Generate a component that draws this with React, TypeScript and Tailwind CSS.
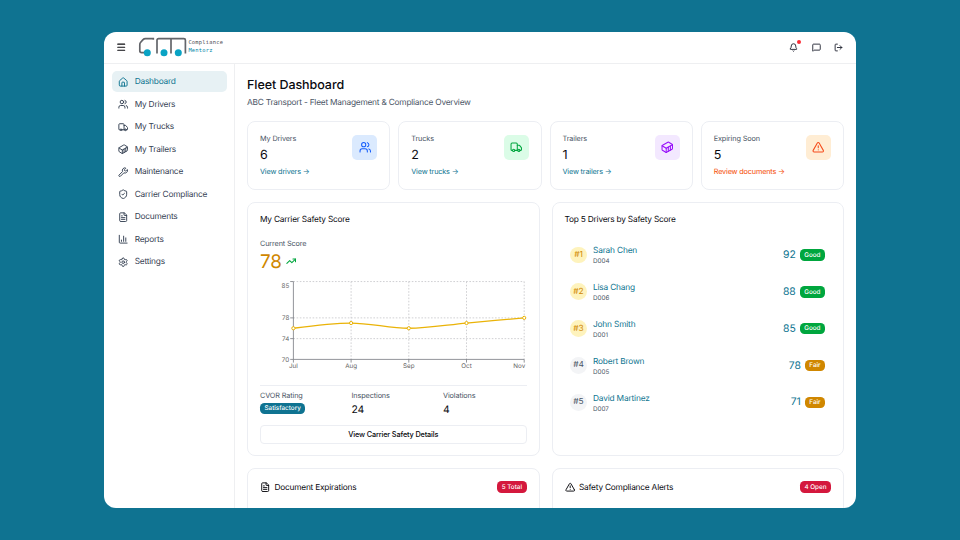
import React from "react";
import {
  Bell,
  ChartColumn,
  Container,
  FileText,
  House,
  LogOut,
  Menu,
  MessageSquare,
  Settings,
  ShieldCheck,
  TrendingUp,
  TriangleAlert,
  Truck,
  Users,
  Wrench,
  type LucideIcon,
} from "lucide-react";

interface NavItem {
  label: string;
  icon: LucideIcon;
  active?: boolean;
}

interface Stat {
  label: string;
  value: string;
  link: string;
  linkClass: string;
  icon: LucideIcon;
  iconClass: string;
}

interface Driver {
  name: string;
  id: string;
  score: number;
}

const navItems: NavItem[] = [
  { label: "Dashboard", icon: House, active: true },
  { label: "My Drivers", icon: Users },
  { label: "My Trucks", icon: Truck },
  { label: "My Trailers", icon: Container },
  { label: "Maintenance", icon: Wrench },
  { label: "Carrier Compliance", icon: ShieldCheck },
  { label: "Documents", icon: FileText },
  { label: "Reports", icon: ChartColumn },
  { label: "Settings", icon: Settings },
];

const stats: Stat[] = [
  { label: "My Drivers", value: "6", link: "View drivers →", linkClass: "text-[#0e7490]", icon: Users, iconClass: "bg-blue-100 text-blue-600" },
  { label: "Trucks", value: "2", link: "View trucks →", linkClass: "text-[#0e7490]", icon: Truck, iconClass: "bg-green-100 text-green-600" },
  { label: "Trailers", value: "1", link: "View trailers →", linkClass: "text-[#0e7490]", icon: Container, iconClass: "bg-purple-100 text-purple-600" },
  { label: "Expiring Soon", value: "5", link: "Review documents →", linkClass: "text-orange-600", icon: TriangleAlert, iconClass: "bg-[#ffedd4] text-[#f54a1a]" },
];

const drivers: Driver[] = [
  { name: "Sarah Chen", id: "D004", score: 92 },
  { name: "Lisa Chang", id: "D006", score: 88 },
  { name: "John Smith", id: "D001", score: 85 },
  { name: "Robert Brown", id: "D005", score: 78 },
  { name: "David Martinez", id: "D007", score: 71 },
];

const history = [
  { month: "Jul", score: 76 },
  { month: "Aug", score: 77 },
  { month: "Sep", score: 76 },
  { month: "Oct", score: 77 },
  { month: "Nov", score: 78 },
];

const Logo = () => (
  <div className="flex items-center">
    <svg width="49" height="20" viewBox="0 0 49 20" fill="none">
      <g stroke="#63656a" strokeWidth="1.7">
        <path d="M15.3 2.8V1.7H7.5Q6 1.7 4.8 2.9L2.7 5.2Q1.8 6.2 1.8 7.6V13.8Q1.8 15.7 3.6 15.7H6" />
        <path d="M19 16.6V3.3Q19 1.7 20.6 1.7H45.8Q47.4 1.7 47.4 3.3V16.6M33 1.7V16.6" />
      </g>
      <g fill="#0aa3c4">
        <circle cx="9.3" cy="15.7" r="3.5" />
        <circle cx="26" cy="15.7" r="3.5" />
        <circle cx="40.3" cy="15.7" r="3.5" />
      </g>
    </svg>
    <div className="ml-[1px] font-['DejaVu_Sans_Mono',monospace] text-[5.4px] leading-[7.5px] tracking-[0.25px]">
      <div className="pt-[1px] text-[#4b4e53]">Compliance</div>
      <div className="pt-[0.5px] text-[#0086a6]">Mentorz</div>
    </div>
  </div>
);

const ScoreChart = () => {
  const px = (i: number) => 33.4 + i * 57.7;
  const py = (v: number) => 82.4 - (v - 70) * 5.19;
  const p = history.map((h, i) => [px(i), py(h.score)]);
  // monotone tangents at each month
  const t = [-7.8, 0, 0, -5.19, -5.19];
  const d = p
    .map(([x, y], i) => {
      if (i === 0) return `M${x},${y}`;
      const [x0, y0] = p[i - 1];
      return `C${x0 + 19.2},${y0 + t[i - 1] / 3} ${x - 19.2},${y - t[i] / 3} ${x},${y}`;
    })
    .join("");

  return (
    <svg width="268" height="96" viewBox="0 0 268 96" fill="none" className="block overflow-visible">
      <g stroke="#c4c4c8" strokeWidth="0.8" strokeDasharray="1.6 1.6">
        {[85, 78, 74].map((v) => (
          <line key={v} x1={px(0)} x2={px(4)} y1={py(v)} y2={py(v)} />
        ))}
        {[1, 2, 3, 4].map((i) => (
          <line key={i} x1={px(i)} x2={px(i)} y1={py(85)} y2={py(70)} />
        ))}
      </g>
      <g stroke="#777a80" strokeWidth="0.8">
        <line x1={px(0)} x2={px(0)} y1={py(85)} y2={py(70)} />
        <line x1={px(0)} x2={px(4)} y1={py(70)} y2={py(70)} />
        {[85, 78, 74, 70].map((v) => (
          <line key={v} x1={px(0) - 3.2} x2={px(0)} y1={py(v)} y2={py(v)} />
        ))}
        {history.map((h, i) => (
          <line key={h.month} x1={px(i)} x2={px(i)} y1={py(70)} y2={py(70) + 3.2} />
        ))}
      </g>
      <g fill="#666" fontSize="6.3">
        {[85, 78, 74, 70].map((v) => (
          <text key={v} x="29.3" y={v === 85 ? 11 : py(v) + 2.3} textAnchor="end">
            {v}
          </text>
        ))}
        {history.map((h, i) => (
          <text key={h.month} x={i === 4 ? 265.3 : px(i)} y="91" textAnchor={i === 4 ? "end" : "middle"}>
            {h.month}
          </text>
        ))}
      </g>
      <path d={d} stroke="#eab308" strokeWidth="1.3" />
      {p.map(([x, y]) => (
        <circle key={x} cx={x} cy={y} r="1.6" fill="#fff" stroke="#eab308" strokeWidth="1" />
      ))}
    </svg>
  );
};

const cardClass = "rounded-[8px] border border-[#eceef3] bg-white";
const titleClass = "text-[8.34px] leading-[12px] tracking-[-0.22px]";
const badgeClass = "flex h-[11.5px] items-center rounded-[4.5px] px-[4.5px] text-[6.3px] font-medium leading-none text-white";

const App: React.FC = () => {
  return (
    <div className="flex h-[540px] w-[960px] items-center justify-center bg-[#0f7391] font-['Inter',sans-serif] text-[#0a0a0f] [text-rendering:geometricPrecision]">
      <div className="flex h-[476px] w-[752px] flex-col overflow-hidden rounded-[12px] bg-white">
        <header className="flex h-[31.5px] shrink-0 items-center border-b border-[#eeeff1] pl-[12.3px] pr-[13px]">
          <Menu className="mr-[11.7px] size-[10.4px]" strokeWidth={2.6} />
          <Logo />
          <div className="ml-auto flex items-center gap-[13.5px] text-[#1f2330]">
            <div className="relative">
              <Bell className="size-[9px]" strokeWidth={2.4} />
              <span className="absolute -top-[3px] left-[7.5px] size-[4px] rounded-full bg-[#fb2c36]" />
            </div>
            <MessageSquare className="size-[9px]" strokeWidth={2.4} />
            <LogOut className="size-[9px]" strokeWidth={2.4} />
          </div>
        </header>

        <div className="flex min-h-0 flex-1">
          <aside className="w-[131px] shrink-0 border-r border-[#eeeff1] pl-[8px] pr-[7.5px] pt-[7.9px]">
            <nav className="flex flex-col gap-[1.5px]">
              {navItems.map((item) => (
                <div
                  key={item.label}
                  className={`flex h-[21px] items-center gap-[6px] rounded-[5px] pl-[6.3px] text-[8.34px] leading-[13px] tracking-[-0.22px] ${
                    item.active ? "bg-[#e7f1f4] text-[#0e7490]" : "text-[#364153]"
                  }`}
                >
                  <item.icon className="size-[10.4px]" strokeWidth={2.2} />
                  <span className="pt-[1.5px]">{item.label}</span>
                </div>
              ))}
            </nav>
          </aside>

          <main className="min-w-0 flex-1 pl-[12px] pr-[12px] pt-[13px]">
            <h1 className="text-[12.5px] font-medium leading-[18px] tracking-[-0.06px]">Fleet Dashboard</h1>
            <p className="text-[8.34px] leading-[16px] tracking-[-0.225px] text-[#4a5565]">
              ABC Transport - Fleet Management &amp; Compliance Overview
            </p>

            <div className="mt-[10px] grid grid-cols-4 gap-[8px]">
              {stats.map((stat) => (
                <div key={stat.label} className={`${cardClass} flex h-[69px] justify-between pl-[12px] pr-[12px] pt-[12px]`}>
                  <div>
                    <div className="text-[7.3px] leading-[10.5px] tracking-[-0.13px] text-[#4a5565]">{stat.label}</div>
                    <div className="pt-[1.5px] text-[12.5px] leading-[19px]">{stat.value}</div>
                    <div className={`whitespace-nowrap text-[7.3px] leading-[14.5px] tracking-[-0.17px] ${stat.linkClass}`}>
                      {stat.link}
                    </div>
                  </div>
                  <div className={`mt-[1.5px] flex size-[25px] items-center justify-center rounded-[5px] ${stat.iconClass}`}>
                    <stat.icon className="size-[12.5px]" />
                  </div>
                </div>
              ))}
            </div>

            <div className="mt-[12px] grid grid-cols-2 gap-[12px]">
              <section className={`${cardClass} h-[254.5px] px-[12px] pt-[11px]`}>
                <h2 className={titleClass}>My Carrier Safety Score</h2>
                <div className="mt-[12.5px] text-[7.3px] leading-[12px] tracking-[-0.14px] text-[#4a5565]">Current Score</div>
                <div className="flex h-[22.5px] items-center gap-[4px]">
                  <span className="pt-[1.5px] text-[18.8px] leading-[22px] text-[#d08700]">78</span>
                  <TrendingUp className="size-[10.4px] text-[#00a63e]" strokeWidth={2.4} />
                </div>
                <div className="mt-[4.5px] h-[109px] border-b border-[#eceef3]">
                  <ScoreChart />
                </div>
                <div className="grid h-[39px] grid-cols-3 gap-[8px] pt-[4px] text-[7.3px] leading-[11px] tracking-[-0.13px] text-[#4a5565]">
                  <div>
                    CVOR Rating
                    <div className={`${badgeClass} mt-[1.5px] w-fit bg-[#0f7391] tracking-normal`}>Satisfactory</div>
                  </div>
                  <div>
                    Inspections
                    <div className="text-[10.4px] leading-[18px] text-[#0a0a0f]">24</div>
                  </div>
                  <div>
                    Violations
                    <div className="text-[10.4px] leading-[18px] text-[#0a0a0f]">4</div>
                  </div>
                </div>
                <button className="block h-[19px] w-full rounded-[4px] border border-[#eceef3] text-[7.3px] font-medium leading-[17px] tracking-[-0.13px]">
                  View Carrier Safety Details
                </button>
              </section>

              <section className={`${cardClass} h-[254.5px] px-[12px] pt-[11px]`}>
                <h2 className={titleClass}>Top 5 Drivers by Safety Score</h2>
                <div className="mt-[11px] flex flex-col pl-[5.6px] pr-[6px]">
                  {drivers.map((driver, index) => (
                    <div key={driver.name} className="flex h-[36.85px] items-center">
                      <div
                        className={`flex size-[16.7px] items-center justify-center rounded-full pt-[0.5px] text-[8.34px] tracking-[-0.1px] ${
                          index < 3 ? "bg-[#fef3bd] text-[#d08700]" : "bg-[#f3f4f6] text-[#4a5565]"
                        }`}
                      >
                        #{index + 1}
                      </div>
                      <div className="ml-[6.2px] pt-[2.5px]">
                        <div className="text-[8.34px] leading-[11px] tracking-[-0.18px] text-[#0e7490]">{driver.name}</div>
                        <div className="text-[6.3px] leading-[9px] text-[#4a5565]">{driver.id}</div>
                      </div>
                      <div className="ml-auto text-[10.4px] text-[#0e7490]">{driver.score}</div>
                      <div
                        className={`${badgeClass} ml-[4px] ${driver.score >= 80 ? "bg-[#00a63e]" : "bg-[#d08700]"}`}
                      >
                        {driver.score >= 80 ? "Good" : "Fair"}
                      </div>
                    </div>
                  ))}
                </div>
              </section>

              <section className={`${cardClass} flex h-[80px] items-start px-[12px] pt-[12px]`}>
                <FileText className="mr-[4px] mt-[0.5px] size-[10.4px]" strokeWidth={2.2} />
                <h2 className={`${titleClass} pt-[0.7px]`}>Document Expirations</h2>
                <span className={`${badgeClass} ml-auto bg-[#d4183d]`}>5 Total</span>
              </section>

              <section className={`${cardClass} flex h-[80px] items-start px-[12px] pt-[12px]`}>
                <TriangleAlert className="mr-[4px] mt-[0.5px] size-[10.4px]" strokeWidth={2.2} />
                <h2 className={`${titleClass} pt-[0.7px]`}>Safety Compliance Alerts</h2>
                <span className={`${badgeClass} ml-auto bg-[#d4183d]`}>4 Open</span>
              </section>
            </div>
          </main>
        </div>
      </div>
    </div>
  );
};

export default App;
